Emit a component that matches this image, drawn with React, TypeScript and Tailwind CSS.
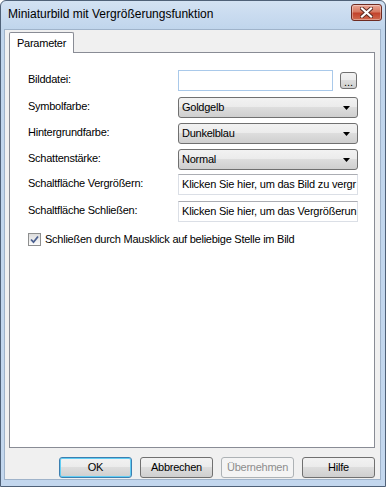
import React from 'react'

const font = "font-['Liberation_Sans',Arial,sans-serif]"

const btnGrad = 'bg-[linear-gradient(to_bottom,#f2f2f2_0%,#ebebeb_50%,#dddddd_50%,#cfcfcf_100%)]'

function Select({ value }: { value: string }) {
  return (
    <div className={`flex items-center h-[21px] w-[180px] rounded-[3px] border border-[#707070] ${btnGrad} pl-[3px] pr-[7px]`}>
      <span className="flex-1 text-[11px] tracking-[-0.25px] text-black leading-none">{value}</span>
      <svg width="7" height="4" viewBox="0 0 7 4">
        <path d="M0 0 H7 L3.5 4 Z" fill="#000" />
      </svg>
    </div>
  )
}

function TextBox({ value, width = 'w-[180px]', focused = false }: { value?: string; width?: string; focused?: boolean }) {
  return (
    <div
      className={`flex items-center h-[21px] ${width} bg-white border overflow-hidden whitespace-nowrap pl-[3px] ${
        focused ? 'border-[#a9c9ea]' : 'border-[#dbdfe6] border-t-[#abadb3]'
      }`}
    >
      <span className="text-[11px] tracking-[-0.2px] text-black leading-none">{value}</span>
    </div>
  )
}

function Row({ label, children, mt }: { label: string; children: React.ReactNode; mt: string }) {
  return (
    <div className={`flex items-center ${mt}`}>
      <span className="w-[150px] text-[11px] tracking-[-0.25px] text-black leading-none -mt-[2px]">{label}</span>
      {children}
    </div>
  )
}

function DlgButton({ label, kind = 'normal' }: { label: string; kind?: 'normal' | 'default' | 'disabled' }) {
  const cls =
    kind === 'default'
      ? `border-[#3c7fb1] ${btnGrad} shadow-[inset_0_0_0_1px_#62cdf3] text-black`
      : kind === 'disabled'
        ? 'border-[#adb2b5] bg-[#f4f4f4] text-[#8d8d8d]'
        : `border-[#707070] ${btnGrad} text-black`
  return (
    <div className={`w-[73px] h-[21px] rounded-[3px] border flex items-center justify-center text-[11px] tracking-[-0.25px] leading-none ${cls}`}>
      {label}
    </div>
  )
}

export default function App() {
  return (
    <div className={`w-[386px] h-[487px] ${font} flex flex-col border border-[#4f6178] rounded-t-[6px] bg-[linear-gradient(to_bottom,#d3e2f3_0px,#c0d5ec_28px,#c3d7ee_100%)]`}>
      {/* title bar */}
      <div className="h-[28px] flex items-center pl-[7px] pr-[3px]">
        <span className="flex-1 text-[12px] text-black leading-none -mt-[2px]">Miniaturbild mit Vergrößerungsfunktion</span>
        <div className="w-[31px] h-[17px] -mt-[6px] rounded-[3px] border border-[#6e2b22] bg-[linear-gradient(to_bottom,#eaa595_0%,#d67a62_45%,#c2432c_55%,#d06a4f_100%)] shadow-[inset_0_0_0_1px_rgba(255,255,255,0.35)] flex items-center justify-center">
          <svg width="13" height="11" viewBox="0 0 13 11">
            <path d="M2 1.5 L11 9.5 M11 1.5 L2 9.5" stroke="#5a2a22" strokeWidth="4" strokeLinecap="square" />
            <path d="M2 1.5 L11 9.5 M11 1.5 L2 9.5" stroke="#ffffff" strokeWidth="2.2" strokeLinecap="square" />
          </svg>
        </div>
      </div>

      {/* client area */}
      <div className="flex-1 ml-[3px] mr-[4px] mb-[6px] bg-[#f0f0f0] border border-[#9fb3ca] flex flex-col pl-[4px] pr-[5px] pt-[2px]">
        <div className="flex">
          <div className="relative z-10 -mb-px h-[21px] px-[7px] bg-white border border-b-0 border-[#898c95] rounded-t-[2px] flex items-center text-[11px] tracking-[-0.25px] text-black leading-none">
            Parameter
          </div>
        </div>
        <div className="h-[396px] bg-white border border-[#898c95] pl-[18px] pt-[17px]">
          <Row label="Bilddatei:" mt="mt-0">
            <TextBox width="w-[155px]" focused />
            <div className={`ml-[7px] w-[17px] h-[17px] rounded-[3px] border border-[#707070] ${btnGrad} flex items-end justify-center text-[11px] leading-[12px] text-black`}>
              ...
            </div>
          </Row>
          <Row label="Symbolfarbe:" mt="mt-[6px]">
            <Select value="Goldgelb" />
          </Row>
          <Row label="Hintergrundfarbe:" mt="mt-[5px]">
            <Select value="Dunkelblau" />
          </Row>
          <Row label="Schattenstärke:" mt="mt-[5px]">
            <Select value="Normal" />
          </Row>
          <Row label="Schaltfläche Vergrößern:" mt="mt-[4px]">
            <TextBox value="Klicken Sie hier, um das Bild zu vergr" />
          </Row>
          <Row label="Schaltfläche Schließen:" mt="mt-[6px]">
            <TextBox value="Klicken Sie hier, um das Vergrößerun" />
          </Row>
          <div className="flex items-center mt-[11px]">
            <div className="w-[13px] h-[13px] border border-[#8e8f8f] bg-[linear-gradient(to_bottom,#dcdcdc,#fbfbfb)] flex items-center justify-center">
              <svg width="9" height="9" viewBox="0 0 9 9">
                <path d="M1 4.5 L3.5 7.2 L8 1.5" fill="none" stroke="#4a5f8f" strokeWidth="1.8" />
              </svg>
            </div>
            <span className="ml-[4px] text-[11px] tracking-[-0.25px] text-black leading-none">
              Schließen durch Mausklick auf beliebige Stelle im Bild
            </span>
          </div>
        </div>
        <div className="flex justify-end gap-[8px] mt-[9px]">
          <DlgButton label="OK" kind="default" />
          <DlgButton label="Abbrechen" />
          <DlgButton label="Übernehmen" kind="disabled" />
          <DlgButton label="Hilfe" />
        </div>
      </div>
    </div>
  )
}
